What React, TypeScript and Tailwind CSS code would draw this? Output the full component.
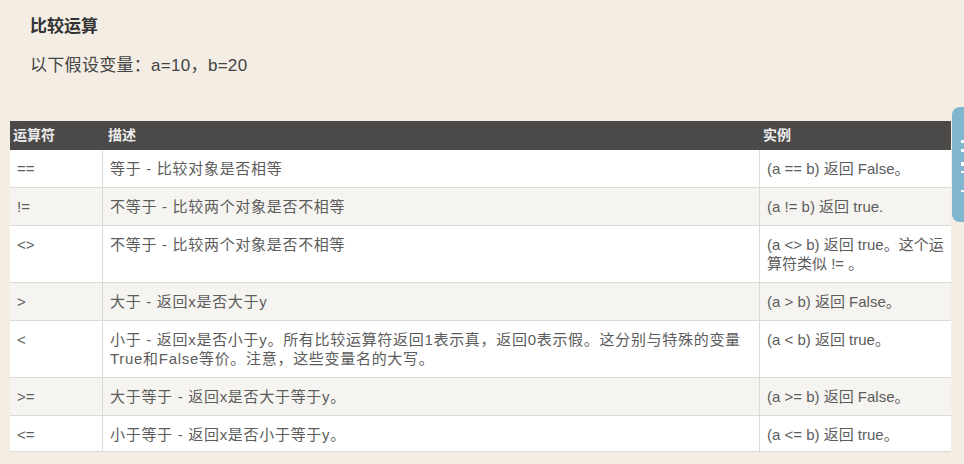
import React from "react";

const font = '"Liberation Sans", Arial, "Noto Sans CJK SC", sans-serif';

type Row = { op: string; desc: React.ReactNode; ex: React.ReactNode; alt: boolean; last?: boolean };

const rows: Row[] = [
  { op: "==", desc: "等于 - 比较对象是否相等", ex: "(a == b) 返回 False。", alt: false },
  { op: "!=", desc: "不等于 - 比较两个对象是否不相等", ex: "(a != b) 返回 true.", alt: true },
  {
    op: "<>",
    desc: "不等于 - 比较两个对象是否不相等",
    ex: (
      <>
        (a &lt;&gt; b) 返回 true。这个运
        <br />
        算符类似 != 。
      </>
    ),
    alt: false,
  },
  { op: ">", desc: "大于 - 返回x是否大于y", ex: "(a > b) 返回 False。", alt: true },
  {
    op: "<",
    desc: (
      <>
        小于 - 返回x是否小于y。所有比较运算符返回1表示真，返回0表示假。这分别与特殊的变量
        <br />
        True和False等价。注意，这些变量名的大写。
      </>
    ),
    ex: "(a < b) 返回 true。",
    alt: false,
  },
  { op: ">=", desc: "大于等于 - 返回x是否大于等于y。", ex: "(a >= b) 返回 False。", alt: true },
  { op: "<=", desc: "小于等于 - 返回x是否小于等于y。", ex: "(a <= b) 返回 true。", alt: false, last: true },
];

export default function App() {
  return (
    <div
      className="relative w-[964px] h-[464px] overflow-hidden bg-[#f3ede4]"
      style={{ fontFamily: font }}
    >
      <div className="px-[30px] pt-[15px]">
        <div className="text-[17px] leading-[24px] font-bold text-[#333]">比较运算</div>
        <div className="mt-[14px] text-[17px] leading-[26px] text-[#444] tracking-[0.3px]">以下假设变量：a=10，b=20</div>
      </div>

      <div className="ml-[10px] mt-[42px] w-[941px]">
        <div className="flex h-[29px] bg-[#4b4a48] text-[14px] font-bold text-[#ececec] leading-[29px]">
          <div className="w-[93px] pl-[3px]">运算符</div>
          <div className="w-[657px] pl-[5px]">描述</div>
          <div className="flex-1 pl-[3px]">实例</div>
        </div>
        {rows.map((r, i) => (
          <div
            key={i}
            className={`flex border-b border-[#dcdad6] text-[15px] leading-[19px] text-[#5c5c5c] ${
              r.alt ? "bg-[#f6f4f0]" : "bg-white"
            }`}
          >
            <div
              className={`w-[93px] px-[7px] border-r border-[#dcdad6] whitespace-nowrap ${
                r.last ? "pt-[9px] pb-[7px]" : "py-[9px]"
              }`}
            >
              {r.op}
            </div>
            <div
              className={`w-[657px] px-[7px] border-r border-[#dcdad6] whitespace-nowrap tracking-[0.7px] ${
                r.last ? "pt-[9px] pb-[7px]" : "py-[9px]"
              }`}
            >
              {r.desc}
            </div>
            <div className={`flex-1 px-[7px] whitespace-nowrap ${r.last ? "pt-[9px] pb-[7px]" : "py-[9px]"}`}>
              {r.ex}
            </div>
          </div>
        ))}
      </div>

      <div className="absolute left-[952px] top-[107px] w-[24px] h-[115px] rounded-l-[8px] bg-[#7fb6cd] flex flex-col items-start pl-[9px] pt-[33px]">
        <div className="w-[4px] h-[3px] bg-white" />
        <div className="mt-[6px] w-[4px] h-[3px] bg-white" />
        <div className="mt-[10px] w-[5px] h-[4px] bg-white" />
        <div className="mt-[5px] w-[4px] h-[2px] bg-white" />
        <div className="mt-[17px] w-[4px] h-[2px] bg-white" />
      </div>
    </div>
  );
}
